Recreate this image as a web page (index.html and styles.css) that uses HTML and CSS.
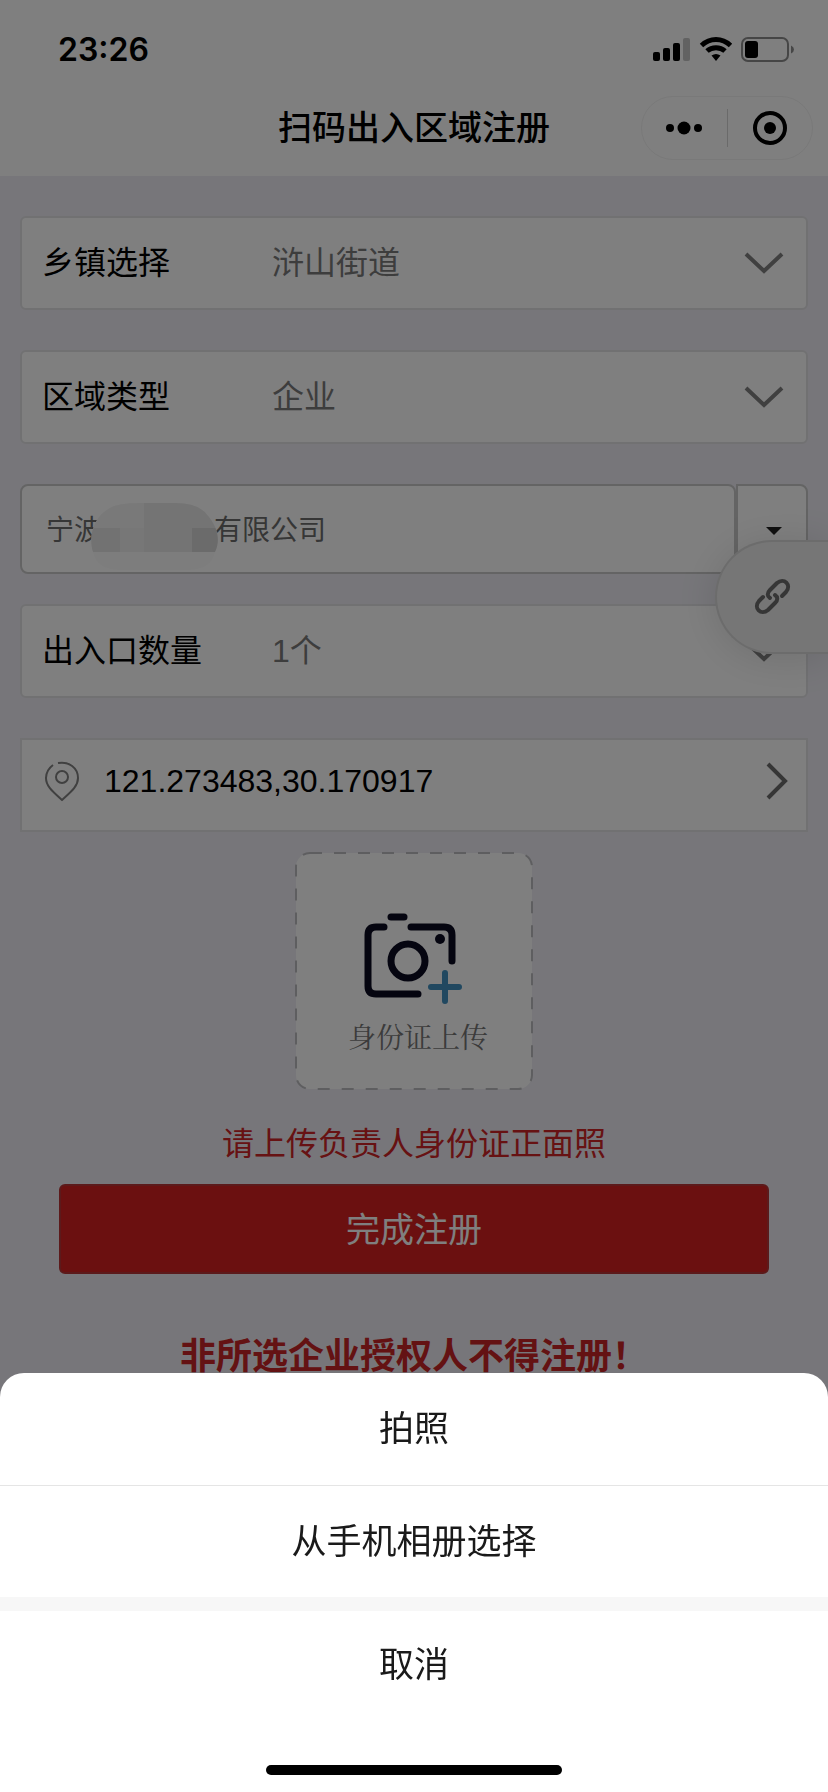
FILE: index.html
```html
<!DOCTYPE html>
<html lang="zh-CN">
<head>
<meta charset="utf-8">
<meta name="viewport" content="width=device-width">
<title>扫码出入区域注册</title>
<link rel="stylesheet" href="styles.css">
</head>
<body>
<div class="page">
  <header class="header">
    <div class="status">
      <time class="clock">23:26</time>
      <svg class="status-icons" width="144" height="28" viewBox="0 0 144 28" aria-hidden="true">
        <rect x="3" y="16" width="7" height="9" rx="2"/>
        <rect x="13" y="12" width="7" height="13" rx="2"/>
        <rect x="23" y="7" width="7" height="18" rx="2"/>
        <rect x="33" y="2" width="7" height="23" rx="2" fill="#c4c4c4"/>
        <g fill="none" stroke="#000">
          <path d="M51.500 9.500C60 1.500 72 1.500 80.500 9.500" stroke-width="5"/>
          <path d="M57 15C62 10.500 70 10.500 75 15" stroke-width="5"/>
        </g>
        <path d="M61.500 19.500Q66 16.500 70.500 19.500L66 25Z"/>
        <rect x="92" y="2" width="46" height="23" rx="6" fill="none" stroke="#8c8c8c" stroke-width="2"/>
        <rect x="95" y="5" width="13" height="17" rx="3"/>
        <path d="M141 9.500Q144 11 144 13.500T141 17.500Z" fill="#8c8c8c"/>
      </svg>
    </div>
    <div class="titlebar">
      <h1 class="title">扫码出入区域注册</h1>
      <div class="capsule">
        <button class="capsule-btn" type="button" aria-label="更多">
          <svg width="40" height="16" viewBox="0 0 40 16"><circle cx="6" cy="8" r="4"/><circle cx="20" cy="8" r="6.500"/><circle cx="34" cy="8" r="4"/></svg>
        </button>
        <button class="capsule-btn" type="button" aria-label="关闭">
          <svg width="36" height="36" viewBox="0 0 36 36"><circle cx="18" cy="18" r="15" fill="none" stroke="#000" stroke-width="4"/><circle cx="18" cy="18" r="6"/></svg>
        </button>
      </div>
    </div>
  </header>

  <form class="form">
    <div class="field">
      <label class="label" for="town">乡镇选择</label>
      <select class="select" id="town"><option>浒山街道</option></select>
      <svg class="chevron" width="40" height="24" viewBox="0 0 40 24"><path d="M2 3L20 20L38 3"/></svg>
    </div>
    <div class="field">
      <label class="label" for="kind">区域类型</label>
      <select class="select" id="kind"><option>企业</option></select>
      <svg class="chevron" width="40" height="24" viewBox="0 0 40 24"><path d="M2 3L20 20L38 3"/></svg>
    </div>
    <div class="combo">
      <input class="combo-input" type="text" aria-label="企业名称" value="宁波　　　　有限公司">
      <button class="combo-btn" type="button" aria-label="展开">
        <svg width="16" height="8" viewBox="0 0 16 8"><path d="M0 0H16L8 8Z" fill="#222"/></svg>
      </button>
      <svg class="mask" width="128" height="70" viewBox="0 0 128 70" aria-hidden="true">
        <defs>
          <clipPath id="blob"><path d="M3 50C-2 34 4 14 20 6Q28 1 50 1H86Q110 1 119 15C127 25 131 38 125 50Q122 68 96 68H32Q6 68 3 50Z"/></clipPath>
        </defs>
        <g clip-path="url(#blob)">
          <rect width="128" height="70" fill="#fbfbfb"/>
          <rect width="54" height="26" fill="#f3f3f3"/>
          <rect x="54" width="74" height="26" fill="#e9e9e9"/>
          <rect y="26" width="30" height="24" fill="#e4e4e4"/>
          <rect x="30" y="26" width="24" height="24" fill="#eee"/>
          <rect x="54" y="26" width="48" height="24" fill="#e9e9e9"/>
          <rect x="102" y="26" width="26" height="24" fill="#d6d6d6"/>
        </g>
      </svg>
    </div>
    <div class="field">
      <label class="label" for="gates">出入口数量</label>
      <select class="select" id="gates"><option>1个</option></select>
      <svg class="chevron" width="40" height="24" viewBox="0 0 40 24"><path d="M2 3L20 20L38 3"/></svg>
    </div>
    <button class="field location" type="button">
      <svg class="pin" width="36" height="42" viewBox="0 0 36 42"><path d="M14 3C25 1 34 8 34 18C34 26 28 31 18 40C8 31 2 26 2 18C2 12 5 8 9 5"/><circle cx="18" cy="17" r="6"/></svg>
      <span class="coords">121.273483,30.170917</span>
      <svg class="arrow" width="22" height="38" viewBox="0 0 22 38"><path d="M2 2L19 19L2 36"/></svg>
    </button>

    <button class="upload" type="button">
      <svg class="upload-frame" viewBox="0 0 238 238" aria-hidden="true"><rect x="1" y="1" width="236" height="236" rx="14" fill="#fff" stroke="#bdbdc0" stroke-width="2" stroke-dasharray="12 12"/></svg>
      <svg class="camera" width="100" height="94" viewBox="0 0 100 94" aria-hidden="true">
        <g fill="none" stroke="#0a0a20" stroke-width="7" stroke-linecap="round" stroke-linejoin="round">
          <path d="M27 5H40"/>
          <path d="M20 15H12Q4 15 4 23V74Q4 82 12 82H54"/>
          <path d="M47 15H80Q88 15 88 23V49"/>
          <circle cx="44" cy="49" r="17"/>
        </g>
        <circle cx="76" cy="27" r="5" fill="#0a0a20"/>
        <path d="M67 75H95M81 61V89" stroke="#4390c0" stroke-width="6" stroke-linecap="round"/>
      </svg>
      <span class="upload-text">身份证上传</span>
    </button>
    <p class="hint">请上传负责人身份证正面照</p>
    <button class="submit" type="button">完成注册</button>
    <p class="notice">非所选企业授权人不得注册！</p>
  </form>

  <button class="float-link" type="button" aria-label="链接">
    <svg width="36" height="36" viewBox="0 0 36 36" fill="none" stroke="#6c6c6c" stroke-width="4" stroke-linecap="round" stroke-linejoin="round">
      <path d="M27 17L31 13C37 6 29 -2 22 4L15 11C12 14 12 17 15 19"/>
      <path d="M8 18L4 22C-2 29 6 37 13 31L20 24C23 21 23 18 20 16"/>
    </svg>
  </button>
</div>

<div class="backdrop"></div>
<div class="sheet" role="dialog" aria-label="选择图片">
  <button class="sheet-item" type="button">拍照</button>
  <button class="sheet-item" type="button">从手机相册选择</button>
  <button class="sheet-item cancel" type="button">取消</button>
  <div class="home-bar"></div>
</div>
</body>
</html>
```
FILE: styles.css
```css
* { box-sizing: border-box; }

body {
  margin: 0;
  font-family: "Liberation Sans", "Noto Sans CJK SC", sans-serif;
  color: #000;
}

button, input, select {
  margin: 0;
  padding: 0;
  border: 0;
  background: none;
  font: inherit;
  color: inherit;
  appearance: none;
}

.page {
  position: relative;
  height: 100vh;
  overflow: hidden;
  background: #eeedf4;
}

/* Header */
.header {
  height: 176px;
  background: #fff;
}

.status {
  display: flex;
  align-items: center;
  justify-content: space-between;
  height: 96px;
  padding: 4px 34px 0 58px;
}

.clock {
  font: 600 32px/40px Inter, sans-serif;
}

.titlebar {
  display: grid;
  grid-template-columns: 1fr auto 1fr;
  align-items: center;
  padding-right: 15px;
  padding-left: 15px;
}

.title {
  grid-column: 2;
  margin: 0;
  font-size: 34px;
  line-height: 64px;
  font-weight: 500;
}

.capsule {
  display: flex;
  justify-self: end;
  align-items: center;
  width: 172px;
  height: 64px;
  border: 1px solid #f2f2f2;
  border-radius: 32px;
}

.capsule-btn {
  display: flex;
  flex: 1;
  align-items: center;
  justify-content: center;
  height: 38px;
}

.capsule-btn + .capsule-btn { border-left: 1px solid #d4d4d4; }

/* Form */
.form {
  display: flex;
  flex-direction: column;
  padding: 40px 20px 0;
}

.field {
  display: flex;
  align-items: center;
  height: 94px;
  margin-bottom: 40px;
  padding: 0 22px 0 20px;
  border: 2px solid #e2e2e5;
  border-radius: 6px;
  background: #fff;
  font-size: 32px;
  line-height: 48px;
}

.label { width: 230px; }

.select {
  flex: 1;
  height: 48px;
  color: #7a7a7a;
}

.chevron, .arrow, .pin {
  fill: none;
  stroke: #808080;
  stroke-width: 4;
}

.combo {
  position: relative;
  display: flex;
  height: 90px;
  margin-bottom: 30px;
}

.combo-input {
  flex: 1;
  min-width: 0;
  padding: 0 0 2px 24px;
  border: 2px solid #c8c8c8;
  border-radius: 8px;
  background: #fff;
  color: #6c6c6c;
  font-size: 28px;
}

.combo-btn {
  display: flex;
  align-items: center;
  justify-content: center;
  width: 72px;
  padding: 4px 0 0 4px;
  border: 2px solid #c8c8c8;
  border-radius: 0 8px 8px 0;
  background: #fff;
}

.mask {
  position: absolute;
  left: 70px;
  top: 18px;
}

.location {
  margin-bottom: 20px;
  padding: 0 18px 8px 22px;
  border-radius: 0;
  text-align: left;
}

.pin { stroke-width: 2; }

.coords {
  flex: 1;
  padding-left: 24px;
}

.arrow { stroke: #6c6c6c; }

.upload {
  position: relative;
  display: flex;
  flex-direction: column;
  align-items: center;
  align-self: center;
  width: 238px;
  height: 238px;
  padding-top: 60px;
}

.upload-frame {
  position: absolute;
  inset: 0;
}

.camera { position: relative; }

.upload-text {
  position: relative;
  padding: 10px 0 0 8px;
  color: #777;
  font: 400 28px/40px "Noto Serif CJK SC", "Noto Sans CJK SC", serif;
}

.hint {
  margin: 30px 0 16px;
  color: #ce2426;
  font-size: 32px;
  line-height: 48px;
  text-align: center;
}

.submit {
  height: 90px;
  margin: 0 39px 56px;
  padding-bottom: 4px;
  border: 2px solid #b83436;
  border-radius: 6px;
  background: #d62120;
  color: #fff;
  font-size: 34px;
}

.notice {
  margin: 0;
  color: #c92426;
  font-size: 36px;
  line-height: 54px;
  font-weight: 700;
  text-align: center;
}

.float-link {
  position: absolute;
  top: 540px;
  right: 0;
  display: flex;
  align-items: center;
  width: 113px;
  height: 114px;
  padding-left: 38px;
  border: 2px solid #d8d8d8;
  border-right: 0;
  border-radius: 57px 0 0 57px;
  background: #ececec;
  box-shadow: 0 4px 40px rgba(0, 0, 0, .12);
}

.float-link svg { overflow: visible; }

/* Action sheet */
.backdrop {
  position: fixed;
  inset: 0;
  background: rgba(0, 0, 0, .5);
}

.sheet {
  position: fixed;
  right: 0;
  bottom: 0;
  left: 0;
  display: flex;
  flex-direction: column;
  border-radius: 24px 24px 0 0;
  background: #fff;
  overflow: hidden;
}

.sheet-item {
  height: 112px;
  color: #1a1a1a;
  font-size: 35px;
  line-height: 52px;
}

.sheet-item + .sheet-item { border-top: 1px solid #e5e5e5; }

.sheet-item.cancel {
  height: 122px;
  border-top: 14px solid #f7f7f7;
}

.home-bar {
  align-self: center;
  width: 296px;
  height: 10px;
  margin: 46px 0 17px;
  border-radius: 5px;
  background: #000;
}
```
